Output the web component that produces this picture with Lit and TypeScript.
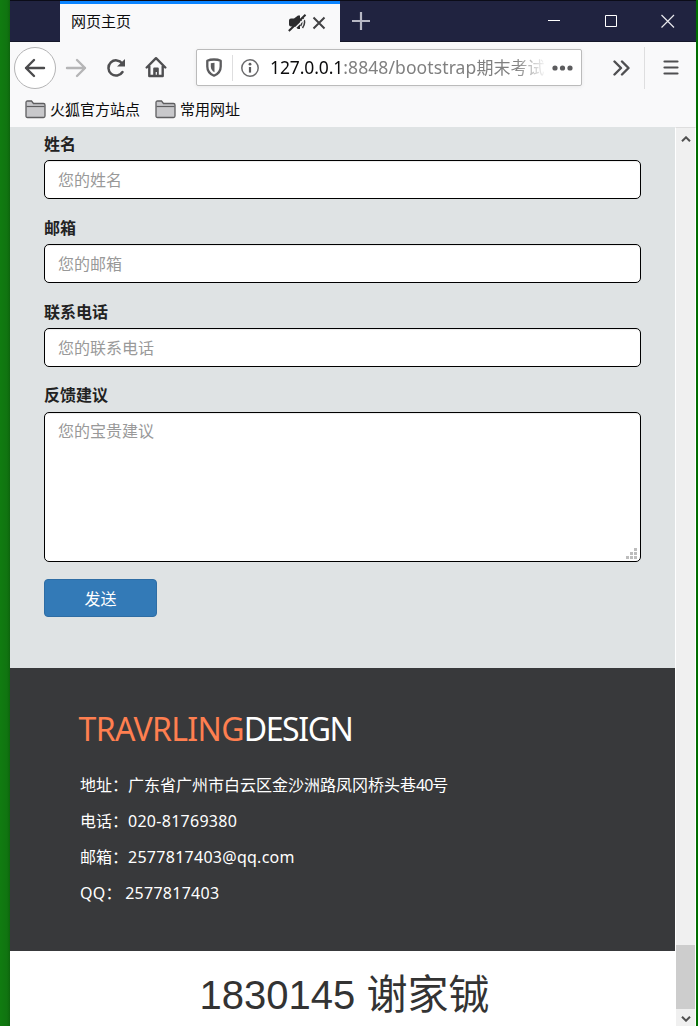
import { LitElement, html, css } from "lit";
import { customElement } from "lit/decorators.js";

const folder = html`<svg width="21" height="19" viewBox="0 0 21 19">
  <path d="M1 2.5Q1 1 2.5 1H6.5L8.5 3.5H18.500Q20 3.500 20 5V16Q20 17.500 18.500 17.500H2.500Q1 17.500 1 16Z" fill="#c8c8cb" stroke="#5e5e60" stroke-width="1.3"/>
  <path d="M1.500 6.500H19.500" stroke="#5e5e60" stroke-width="1.2"/>
</svg>`;

@customElement("browser-chrome")
class BrowserChrome extends LitElement {
  static styles = css`
    :host { display: block; height: 127px; background: #f9f9fa; font-family: "Noto Sans", "Noto Sans CJK SC", sans-serif; color: #0c0c0d; box-sizing: border-box; }
    svg { display: block; flex: none; }
    .titlebar { height: 42px; box-sizing: border-box; display: flex; background: #202340; border-top: 1px solid #0b0c18; border-bottom: 1px solid #151729; }
    .tab { margin-left: 50px; width: 280px; height: 41px; box-sizing: border-box; background: #f9f9fa; border-top: 3px solid #0a84ff; display: flex; align-items: center; padding: 0 14px 4px 11px; }
    .tabname { flex: 1; font: 15px/22px "Noto Sans CJK SC", sans-serif; }
    .mute { margin-right: 5px; margin-top: 3px; }
    .x { margin-top: 3px; }
    .plus { margin: 11px 0 0 12px; }
    .winbtns { margin-left: auto; display: flex; gap: 44px; padding: 13px 21px 0 0; }
    .close { margin-left: -1px; }
    .tools { height: 51px; display: flex; align-items: center; }
    .back { width: 42px; height: 42px; box-sizing: border-box; border: 1px solid #b4b4b5; border-radius: 50%; background: #fff; margin-left: 4px; display: flex; align-items: center; justify-content: center; flex: none; }
    .forward { margin-left: 9px; }
    .reload { margin-left: 19px; }
    .home { margin-left: 18px; }
    .url { margin-left: 29px; width: 386px; flex: none; height: 37px; box-sizing: border-box; border: 1px solid #bbb; border-radius: 2px; background: #fff; box-shadow: 0 1px 4px rgba(0,0,0,.07); display: flex; align-items: center; padding-left: 8px; }
    .split { width: 1px; height: 26px; background: #dededf; margin: 0 8px 0 9px; }
    .address { width: 274px; flex: none; margin-left: 11px; white-space: nowrap; font-size: 17.5px; line-height: 28px; color: #808080; letter-spacing: 0.1px; -webkit-mask-image: linear-gradient(to right, #000 245px, rgba(0,0,0,.1) 274px); mask-image: linear-gradient(to right, #000 245px, rgba(0,0,0,.1) 274px); }
    .host { color: #0c0c0d; letter-spacing: -0.1px; }
    .cjk { font-size: 17px; letter-spacing: 0; }
    .dots { margin-left: 8px; }
    .more { margin-left: 30px; }
    .bar { width: 1px; height: 42px; background: #dededf; margin: 0 18px 0 14px; }
    .marks { display: flex; align-items: center; height: 32px; padding-left: 15px; font: 15px/22px "Noto Sans CJK SC", sans-serif; }
    .mark { display: flex; align-items: center; gap: 4px; margin-right: 15px; }
    .mark svg { margin-top: 1px; }
  `;
  render() {
    return html`
      <div class="titlebar">
        <div class="tab">
          <span class="tabname">网页主页</span>
          <svg class="mute" width="19" height="18" viewBox="0 0 19 18">
            <path d="M1 6.500Q1 4.500 3 4.500H6L10 1.500H12V15H10L6.500 12.500H3Q1 12.500 1 10.500Z" fill="#2c2c2e"/>
            <path d="M13 6Q14.800 8.500 12.500 12M15.200 4Q18.300 8.500 14.500 14" fill="none" stroke="#3c3c3e" stroke-width="1.500"/>
            <path d="M2.500 18.500L19 2.500" stroke="#f9f9fa" stroke-width="1.500"/>
            <path d="M.8 17L17.500 .8" stroke="#2c2c2e" stroke-width="2"/>
          </svg>
          <svg class="x" width="14" height="14" viewBox="0 0 14 14"><path d="M1.500 1.500L12.500 12.500M12.500 1.500L1.500 12.500" stroke="#424244" stroke-width="2"/></svg>
        </div>
        <svg class="plus" width="18" height="18" viewBox="0 0 18 18"><path d="M9 0V18M0 9H18" stroke="#b7b8c4" stroke-width="2.200"/></svg>
        <div class="winbtns">
          <svg width="13" height="14" viewBox="0 0 13 14"><path d="M0 6.500H12" stroke="#fff"/></svg>
          <svg width="13" height="14" viewBox="0 0 13 14"><path d="M.5 1.500H11.500V12.500H.5Z" fill="none" stroke="#fff"/></svg>
          <svg class="close" width="14" height="14" viewBox="0 0 14 14"><path d="M.5 1L13 13.500M13 1L.5 13.500" stroke="#e8e8ec" stroke-width="1.200"/></svg>
        </div>
      </div>
      <div class="tools">
        <div class="back"><svg width="22" height="20" viewBox="0 0 22 20"><path d="M20 10H2M10 2L2 10L10 18" fill="none" stroke="#4b4b4d" stroke-width="2.400" stroke-linecap="round" stroke-linejoin="round"/></svg></div>
        <svg class="forward" width="22" height="20" viewBox="0 0 22 20"><path d="M2 10H20M12 2L20 10L12 18" fill="none" stroke="#b5b5b6" stroke-width="2.400" stroke-linecap="round" stroke-linejoin="round"/></svg>
        <svg class="reload" width="21" height="20" viewBox="0 0 21 20"><path d="M16.500 14A7.600 7.600 0 1 1 16.200 5.500" fill="none" stroke="#4f4f51" stroke-width="2.500" stroke-linecap="round"/><path d="M19 1V8.500H11Z" fill="#4f4f51"/></svg>
        <svg class="home" width="22" height="22" viewBox="0 0 22 22"><path d="M1.700 10.500L11 1.200L20.300 10.500M4.300 9.500V19H17.700V9.500" fill="none" stroke="#4f4f51" stroke-width="2.400" stroke-linecap="round" stroke-linejoin="round"/><path d="M8.200 19V11.500Q8.200 10.500 9.200 10.500H12.800Q13.800 10.500 13.800 11.500V19H11.900V15H10.700V19Z" fill="#4f4f51"/></svg>
        <div class="url">
          <svg width="18" height="20" viewBox="0 0 18 20"><path d="M9 1.500Q13 1.500 15.700 2.800V8.500Q15.700 15 9 17.700Q2.300 15 2.300 8.500V2.800Q5 1.500 9 1.500Z" fill="none" stroke="#5c5c5e" stroke-width="2.300" stroke-linejoin="round"/><path d="M9.500 4.800V14.200Q5.800 12.300 5.800 8.500V5.300Q7.500 4.800 9.500 4.800Z" fill="#5c5c5e"/></svg>
          <span class="split"></span>
          <svg width="18" height="18" viewBox="0 0 18 18"><circle cx="9" cy="9" r="8.200" fill="none" stroke="#6b6b6d" stroke-width="1.500"/><path d="M9 8V13.600" stroke="#5c5c5e" stroke-width="2.200"/><circle cx="9" cy="5.200" r="1.400" fill="#5c5c5e"/></svg>
          <div class="address"><span class="host">127.0.0.1</span>:8848/bootstrap<span class="cjk">期末考试</span></div>
          <svg class="dots" width="22" height="6" viewBox="0 0 22 6"><g fill="#5c5c5e"><circle cx="3" cy="3" r="2.600"/><circle cx="10.500" cy="3" r="2.600"/><circle cx="18" cy="3" r="2.600"/></g></svg>
        </div>
        <svg class="more" width="18" height="16" viewBox="0 0 18 16"><path d="M2.500 1.500L9 8L2.500 14.500M10 1.500L16.500 8L10 14.500" fill="none" stroke="#4f4f51" stroke-width="2.400" stroke-linecap="round" stroke-linejoin="round"/></svg>
        <span class="bar"></span>
        <svg width="16" height="16" viewBox="0 0 16 16"><path d="M1.500 1.500H14.500M1.500 7.500H14.500M1.500 13.500H14.500" stroke="#4f4f51" stroke-width="2.200" stroke-linecap="round"/></svg>
      </div>
      <div class="marks">
        <span class="mark">${folder}火狐官方站点</span>
        <span class="mark">${folder}常用网址</span>
      </div>
    `;
  }
}

@customElement("feedback-form")
class FeedbackForm extends LitElement {
  static styles = css`
    :host { display: block; height: 541px; box-sizing: border-box; padding: 5px 34px 0; background: #dfe3e4; font: 16px/24px "Noto Sans CJK SC", sans-serif; color: #222; }
    .group { height: 84px; }
    .group.last { height: 195px; }
    label { display: block; font-weight: 700; height: 28px; line-height: 22px; }
    .group.last label { line-height: 20px; }
    input, textarea { display: block; width: 597px; height: 39px; box-sizing: border-box; margin: 0; border: 1px solid #000; border-radius: 5px; padding: 0 13px 2px; background: #fff; font: inherit; outline: none; box-shadow: inset 0 1px 1px rgba(0,0,0,.075); }
    textarea { height: 150px; padding-top: 5px; resize: none; }
    ::placeholder { color: #999; opacity: 1; }
    .area { display: grid; width: 597px; }
    .area > * { grid-area: 1 / 1; }
    .grip { align-self: end; justify-self: end; margin: 0 4px 3px 0; }
    button { display: block; width: 113px; height: 38px; box-sizing: border-box; margin: 0; padding: 0 0 1px; border: 1px solid #2e6da4; border-radius: 4px; background: #337ab7; color: #fff; font: 16px/34px "Noto Sans CJK SC", sans-serif; }
  `;
  render() {
    return html`
      ${[["姓名", "您的姓名"], ["邮箱", "您的邮箱"], ["联系电话", "您的联系电话"]].map(
        ([name, hint]) => html`<div class="group"><label>${name}</label><input placeholder=${hint}></div>`
      )}
      <div class="group last">
        <label>反馈建议</label>
        <div class="area">
          <textarea placeholder="您的宝贵建议"></textarea>
          <svg class="grip" width="11" height="11" viewBox="0 0 11 11"><path d="M8 0h3v3h-3zM4 4h3v3h-3zM8 4h3v3h-3zM0 8h3v3h-3zM4 8h3v3h-3zM8 8h3v3h-3z" fill="#bdbdbd"/></svg>
        </div>
      </div>
      <button>发送</button>
    `;
  }
}

@customElement("site-footer")
class SiteFooter extends LitElement {
  static styles = css`
    :host { display: block; }
    .contact { height: 283px; box-sizing: border-box; background: #38393b; color: #fff; padding: 39px 0 0 70px; }
    .brand { font: 32px/44px "Noto Sans", sans-serif; letter-spacing: -1.45px; margin-left: -1.5px; white-space: nowrap; }
    .accent { color: #ff7f50; letter-spacing: -0.65px; }
    .lines { margin-top: 15px; font: 16px/36px "Noto Sans CJK SC", sans-serif; }
    .line { height: 36px; white-space: pre; }
    .latin { font-family: "Noto Sans", sans-serif; letter-spacing: 0.27px; }
    .tight { letter-spacing: -1px; }
    .author { height: 75px; box-sizing: border-box; background: #fff; color: #333; text-align: center; font: 41px/60px "Noto Sans CJK SC", sans-serif; padding: 10px 0 0 4px; white-space: nowrap; }
    .number { font: 40px/60px "Liberation Sans", sans-serif; }
  `;
  render() {
    return html`
      <div class="contact">
        <div class="brand"><span class="accent">TRAVRLING</span>DESIGN</div>
        <div class="lines">
          <div class="line">地址：广东省广州市白云区金沙洲路凤冈桥头巷<span class="latin tight">40</span>号</div>
          <div class="line">电话：<span class="latin">020-81769380</span></div>
          <div class="line">邮箱：<span class="latin">2577817403@qq.com</span></div>
          <div class="line"><span class="latin">QQ</span>： <span class="latin">2577817403</span></div>
        </div>
      </div>
      <div class="author"><span class="number">1830145 </span>谢家铖</div>
    `;
  }
}

@customElement("app-root")
class AppRoot extends LitElement {
  static styles = css`
    :host { display: block; width: 698px; height: 1026px; overflow: hidden; box-sizing: border-box; padding: 0 2px 0 10px; background: linear-gradient(to right, #107c10 0, #107410 7px, #0d650d 10px, #006f00 11px); }
    .body { display: flex; height: 899px; }
    .page { width: 665px; flex: none; }
    .scroll { width: 21px; box-sizing: border-box; background: #f0f0f0; border-left: 1px solid #fff; border-right: 1px solid #fff; border-top: 1px solid #dedede; display: flex; flex-direction: column; align-items: center; }
    .up { margin-top: 8px; }
    .thumb { width: 19px; height: 64px; margin-top: auto; background: #cdcdcd; }
    .down { margin: 7px 0 4px; }
    svg { display: block; flex: none; }
  `;
  render() {
    return html`
      <browser-chrome></browser-chrome>
      <div class="body">
        <div class="page">
          <feedback-form></feedback-form>
          <site-footer></site-footer>
        </div>
        <div class="scroll">
          <svg class="up" width="10" height="6" viewBox="0 0 10 6"><path d="M1 5.300L5 1.300L9 5.300" fill="none" stroke="#505050" stroke-width="2"/></svg>
          <div class="thumb"></div>
          <svg class="down" width="10" height="6" viewBox="0 0 10 6"><path d="M1 .7L5 4.700L9 .7" fill="none" stroke="#505050" stroke-width="2"/></svg>
        </div>
      </div>
    `;
  }
}
